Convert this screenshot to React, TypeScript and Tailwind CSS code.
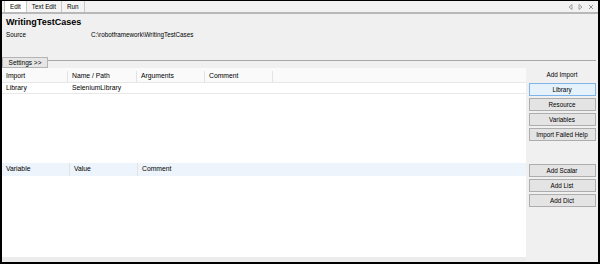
import { ReactNode } from 'react';

function SideButton({ label, active }: { label: string; active?: boolean }) {
  return (
    <div
      className={`flex h-[13px] w-[67px] items-center justify-center border text-[6.3px] text-black ${
        active ? 'border-[#7eb4ea] bg-[#e5f1fb]' : 'border-[#adadad] bg-[#e4e4e4]'
      }`}
    >
      {label}
    </div>
  );
}

function Cell({ children, w, sep, className = '' }: { children?: ReactNode; w?: string; sep?: boolean; className?: string }) {
  return (
    <div className={`flex h-full items-center pl-[4px] ${w ?? 'flex-1'} ${sep ? 'border-r border-[#e3e3e3]' : ''} ${className}`}>
      {children}
    </div>
  );
}

function Tab({ label, active }: { label: string; active?: boolean }) {
  return (
    <div
      className={`flex h-[11px] items-center border-r border-[#c8c8c8] px-[5px] text-[6.3px] text-black ${
        active ? 'bg-white border-l' : 'bg-[#f4f4f4]'
      }`}
    >
      {label}
    </div>
  );
}

export default function App() {
  return (
    <div className="h-[264px] w-[600px] bg-white font-['Liberation_Sans',Arial,sans-serif]">
      <div className="flex h-[264px] flex-col border-t border-r-2 border-b-2 border-l-2 border-black bg-[#f0f0f0]">
        {/* tab strip */}
        <div className="flex h-[13px] shrink-0 items-start border-b-2 border-[#b8b8b8] bg-[#f2f2f2] pl-[2px]">
          <Tab label="Edit" active />
          <Tab label="Text Edit" />
          <Tab label="Run" />
          <div className="ml-auto mr-[4px] mt-[3px] flex items-center gap-[5px] text-[#8a8a8a]">
            <svg width="5" height="6" viewBox="0 0 5 6">
              <path d="M4 0.5 L1 3 L4 5.5 Z" fill="none" stroke="currentColor" strokeWidth="0.8" />
            </svg>
            <svg width="5" height="6" viewBox="0 0 5 6">
              <path d="M1 0.5 L4 3 L1 5.5 Z" fill="none" stroke="currentColor" strokeWidth="0.8" />
            </svg>
            <svg width="6" height="6" viewBox="0 0 6 6">
              <path d="M1 1 L5 5 M5 1 L1 5" stroke="currentColor" strokeWidth="0.9" />
            </svg>
          </div>
        </div>

        {/* header */}
        <div className="mt-[3px] pl-[4px] text-[9px] font-bold leading-[11px] text-black">WritingTestCases</div>
        <div className="mt-[3px] flex pl-[4px] text-[6.3px] leading-[8px] text-black">
          <span className="w-[85px]">Source</span>
          <span>C:\robotframework\WritingTestCases</span>
        </div>

        {/* settings */}
        <div className="mt-[18px] flex h-[11px] items-start">
          <div className="flex h-[11px] w-[46px] items-center justify-center border border-[#b4b4b4] bg-[#e6e6e6] text-[6.5px] text-black">
            Settings &gt;&gt;
          </div>
          <div className="mt-[3px] mr-[2px] h-px flex-1 bg-[#a8a8a8]" />
        </div>

        {/* main */}
        <div className="flex flex-1">
          <div className="flex w-[524px] flex-col">
            <div className="h-[95px] bg-white">
              <div className="flex h-[15px] border-b border-[#e8e8e8] bg-[#fafafa] pt-[3px] text-[6.8px] text-black">
                <Cell w="w-[66px]" sep>Import</Cell>
                <Cell w="w-[69px]" sep>Name / Path</Cell>
                <Cell w="w-[68px]" sep>Arguments</Cell>
                <Cell w="w-[68px]" sep>Comment</Cell>
                <Cell />
              </div>
              <div className="flex h-[11px] border-b border-[#e8e8e8] text-[6.8px] text-black">
                <Cell w="w-[66px]">Library</Cell>
                <Cell w="w-[69px]">SeleniumLibrary</Cell>
                <Cell />
              </div>
            </div>
            <div className="flex-1 bg-white">
              <div className="flex h-[13px] bg-[#eef4fb] text-[6.8px] text-black">
                <Cell w="w-[68px]" sep>Variable</Cell>
                <Cell w="w-[68px]" sep>Value</Cell>
                <Cell>Comment</Cell>
              </div>
            </div>
            <div className="h-[5px] bg-[#ececec]" />
          </div>

          <div className="flex flex-1 flex-col items-center">
            <div className="flex h-[95px] flex-col items-center">
              <div className="flex h-[12px] items-center pt-[1px] text-[6.3px] text-black">Add Import</div>
              <div className="mt-[3px] flex flex-col gap-[2px]">
                <SideButton label="Library" active />
                <SideButton label="Resource" />
                <SideButton label="Variables" />
                <SideButton label="Import Failed Help" />
              </div>
            </div>
            <div className="mt-[1px] flex flex-col gap-[2px]">
              <SideButton label="Add Scalar" />
              <SideButton label="Add List" />
              <SideButton label="Add Dict" />
            </div>
          </div>
        </div>
      </div>
    </div>
  );
}
